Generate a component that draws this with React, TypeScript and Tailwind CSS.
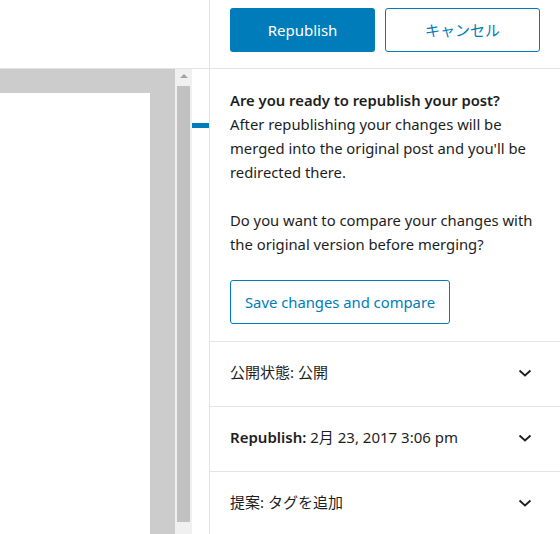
import type { ReactNode } from 'react';

const FONT = '[font-family:"Noto_Sans","Noto_Sans_CJK_JP",sans-serif]';

function Chevron() {
  return (
    <svg width="14" height="8" viewBox="0 0 14 8" className="shrink-0">
      <path d="M1.5 1.5 L7 6.5 L12.5 1.5" fill="none" stroke="#1e1e1e" strokeWidth="1.8" />
    </svg>
  );
}

function PanelRow({ children }: { children: ReactNode }) {
  return (
    <div className="flex h-[65px] shrink-0 items-center justify-between border-b border-[#e2e4e7] pb-[3px] pl-[20px] pr-[28px] text-[15px] text-[#1e1e1e]">
      <div>{children}</div>
      <Chevron />
    </div>
  );
}

export default function App() {
  return (
    <div className={`flex h-[534px] w-[560px] overflow-hidden bg-white ${FONT}`}>
      {/* Editor side */}
      <div className="flex w-[209px] shrink-0 flex-col">
        <div className="h-[69px] shrink-0 border-b border-[#e2e4e7]" />
        <div className="flex min-h-0 flex-1">
          <div className="w-[175px] bg-[#cccccc] pt-[24px]">
            <div className="h-full w-[150px] bg-white" />
          </div>
          <div className="flex w-[17px] flex-col items-center bg-[#f0f0f0] pt-[5px]">
            <div className="h-0 w-0 border-x-[4px] border-b-[4px] border-x-transparent border-b-[#a3a3a3]" />
            <div className="mt-[8px] mb-[12px] w-[13px] flex-1 bg-[#c1c1c1]" />
          </div>
          <div className="w-[17px] pt-[54px]">
            <div className="h-[5px] w-full bg-[#007cba]" />
          </div>
        </div>
      </div>

      {/* Sidebar */}
      <div className="flex w-[351px] flex-col border-l border-[#e2e4e7]">
        <div className="flex h-[69px] shrink-0 gap-[10px] border-b border-[#e2e4e7] px-[20px] pt-[8px]">
          <button className="h-[44px] w-[145px] rounded-[3px] bg-[#007cba] text-[15px] text-white">
            Republish
          </button>
          <button className="h-[44px] w-[155px] rounded-[3px] border border-[#007cba] bg-white text-[15px] text-[#007cba]">
            キャンセル
          </button>
        </div>

        <div className="shrink-0 border-b border-[#e2e4e7] px-[20px] pt-[19px] pb-[17px] text-[14.8px] leading-[24px] text-[#1e1e1e]">
          <p className="font-semibold">Are you ready to republish your post?</p>
          <p>
            After republishing your changes will be merged into the original post and you'll be
            redirected there.
          </p>
          <p className="mt-[24px]">
            Do you want to compare your changes with the original version before merging?
          </p>
          <button className="mt-[24px] h-[44px] rounded-[3px] border border-[#007cba] px-[14px] text-[14.8px] text-[#007cba]">
            Save changes and compare
          </button>
        </div>

        <PanelRow>公開状態: 公開</PanelRow>
        <PanelRow>
          <span className="font-semibold">Republish:</span> 2月 23, 2017 3:06 pm
        </PanelRow>
        <PanelRow>提案: タグを追加</PanelRow>
      </div>
    </div>
  );
}
